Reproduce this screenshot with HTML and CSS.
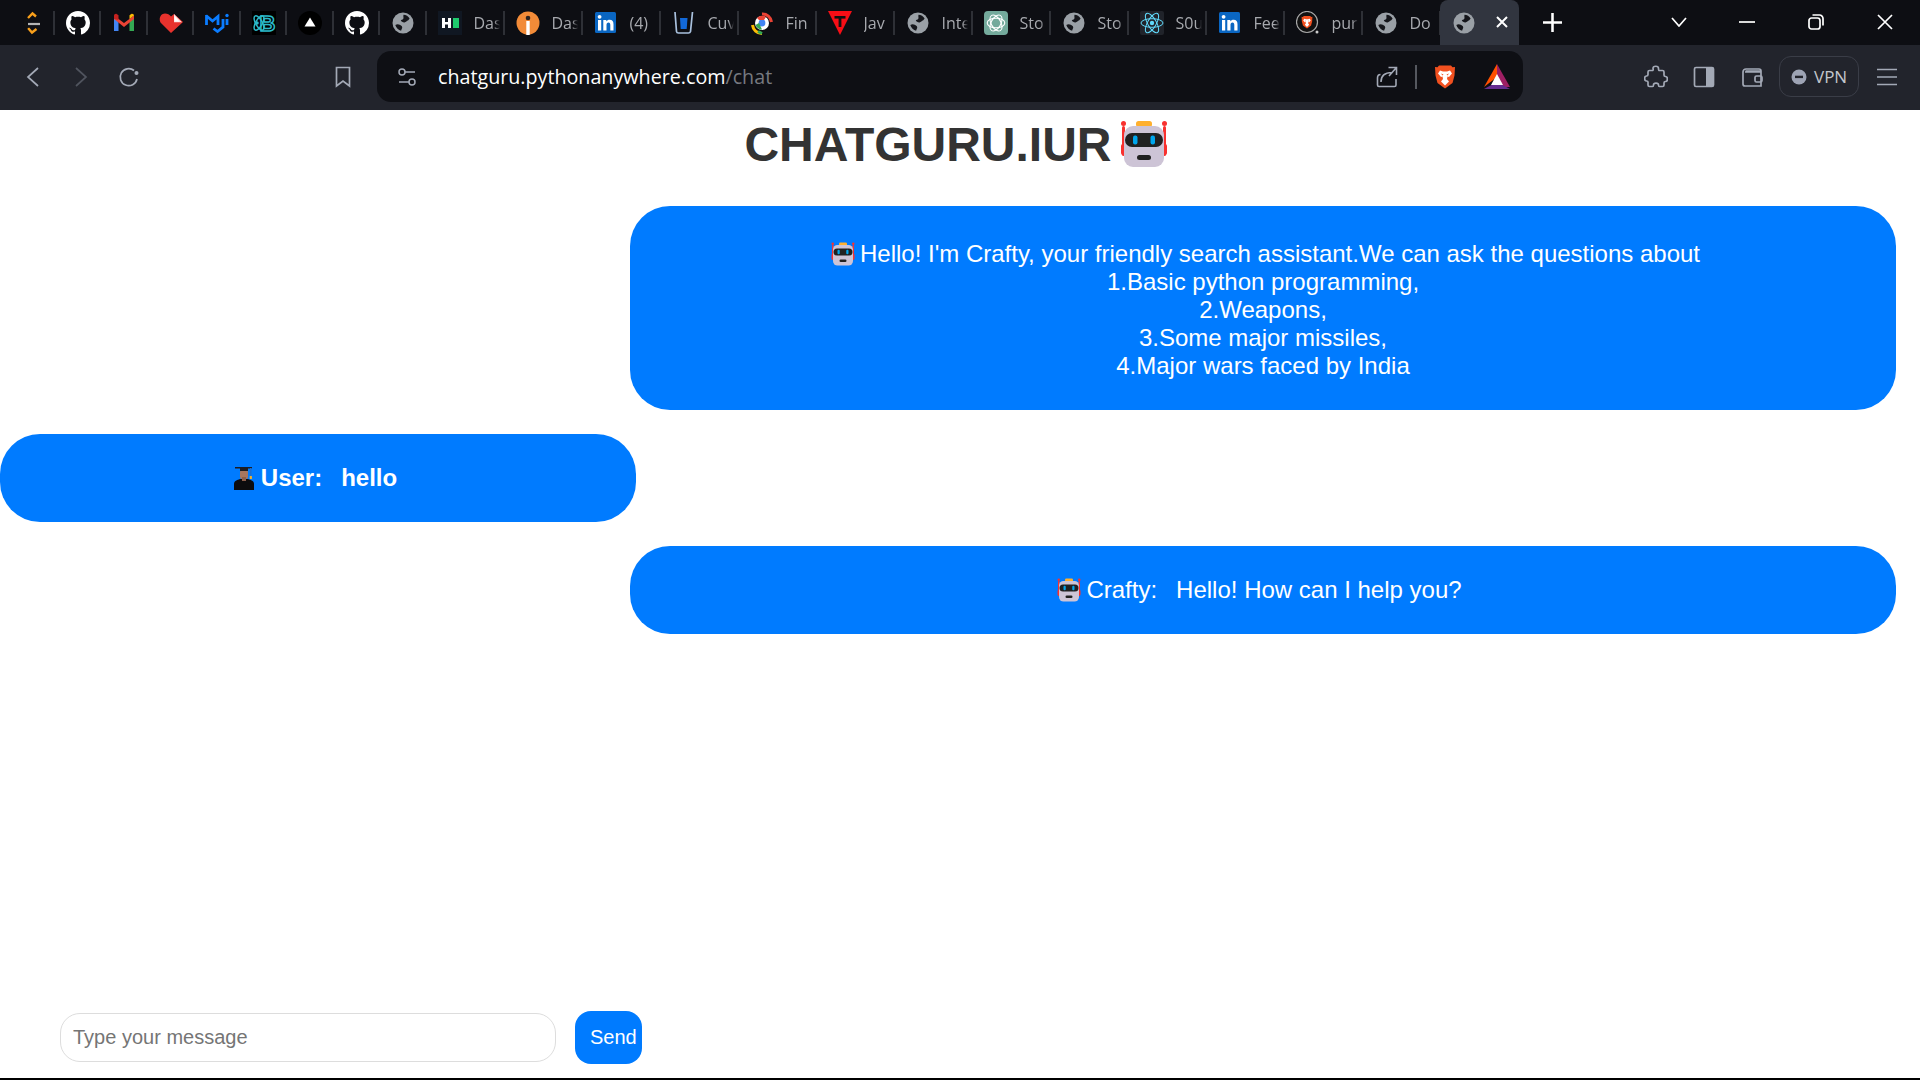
FILE: index.html
```html
<!DOCTYPE html>
<html lang="en">
<head>
<meta charset="utf-8">
<title>ChatGuru</title>
<link rel="stylesheet" href="styles.css">
</head>
<body>
<svg class="defs" xmlns="http://www.w3.org/2000/svg">
  <symbol id="i-github" viewBox="0 0 16 16"><path fill="#fff" d="M8 0C3.58 0 0 3.58 0 8c0 3.54 2.29 6.53 5.47 7.59.4.07.55-.17.55-.38 0-.19-.01-.82-.01-1.49-2.01.37-2.53-.49-2.69-.94-.09-.23-.48-.94-.82-1.13-.28-.15-.68-.52-.01-.53.63-.01 1.08.58 1.23.82.72 1.21 1.87.87 2.33.66.07-.52.28-.87.51-1.07-1.78-.2-3.64-.89-3.64-3.95 0-.87.31-1.59.82-2.15-.08-.2-.36-1.02.08-2.12 0 0 .67-.21 2.2.82.64-.18 1.32-.27 2-.27.68 0 1.36.09 2 .27 1.53-1.04 2.2-.82 2.2-.82.44 1.1.16 1.92.08 2.12.51.56.82 1.27.82 2.15 0 3.07-1.87 3.75-3.65 3.95.29.25.54.73.54 1.48 0 1.07-.01 1.93-.01 2.2 0 .21.15.46.55.38A8.013 8.013 0 0016 8c0-4.42-3.58-8-8-8z"/></symbol>
  <symbol id="i-globe" viewBox="0 0 24 24"><circle cx="12" cy="12" r="10.500" fill="#9aa0a6"/><path fill="#15161b" d="M12.500 3.800c2.600.2 4.800 1.500 6.100 3.700l-1.300 1.800c-1.700.5-2.300 2.300-4.100 2.100-1.500 0-2.900-.9-3.400-2.200 1.400-.3 2.700-.9 2.700-2.100 0-1.300-.3-2-0-3.300zM4.300 14c1.500-1.100 3.200-1.100 4.400-.2 1.200.8 2.300 1 2.500 2.400.2 1.200-.8 1.800-1.100 3.500-2.600-.6-4.900-3-5.800-5.700z"/></symbol>
  <symbol id="i-leet" viewBox="0 0 24 24"><path d="M14 2 5 11.500" fill="none" stroke="#111" stroke-width="2.500"/><path d="M17 5.500 13.500 2.500 9 7" fill="none" stroke="#f89f1b" stroke-width="2.400"/><path d="M9 17l4 4.500 4.500-3.500" fill="none" stroke="#f89f1b" stroke-width="2.400"/><path d="M5 11.500 9 17" fill="none" stroke="#111" stroke-width="2.500"/><path d="M9 13h12" stroke="#b3b3b3" stroke-width="2.200"/></symbol>
  <symbol id="i-gmail" viewBox="0 0 24 24"><path fill="#4285f4" d="M2 6v14h4.500V9z"/><path fill="#34a853" d="M22 6v14h-4.500V9z"/><path fill="#ea4335" d="M2 4.500 12 12l10-7.500V8l-10 8L2 8z"/><path fill="#fbbc04" d="M17.500 8 22 4.500c0-1-1-2-2.300-1.800L17.500 4.300z"/><path fill="#c5221f" d="M2 8V4.500c0-1 1-2 2.300-1.800l2.200 1.600V9z"/></symbol>
  <symbol id="i-heart" viewBox="0 0 24 24"><path fill="#e8322d" d="M12 22 1.500 11.500C-.5 8 1.500 2.500 6 2.500c2.500 0 4.500 1 6 3 1-1 2-1.800 3-2.500l9 8z"/><path fill="#ffd9d6" d="M15 3l8 8.300h-8z"/><path fill="#fff" d="M15.500 5l5 5.500h-5z"/></symbol>
  <symbol id="i-mui" viewBox="0 0 24 24"><path fill="none" stroke="#0a7cff" stroke-width="2.800" d="M1.500 4v10M1 4.500l6.500 5.500 5.500-4.500V14M18 8v8l-5.500 4.500-4-3M22 8v6"/><circle cx="22" cy="4.500" r="1.700" fill="#0a7cff"/></symbol>
  <symbol id="i-atom" viewBox="0 0 24 24"><rect width="24" height="24" fill="#000"/><g fill="none" stroke="#2bb9c9" stroke-width="1.500"><ellipse cx="7" cy="12" rx="8" ry="3.300" transform="rotate(60 7 12)"/><ellipse cx="7" cy="12" rx="8" ry="3.300" transform="rotate(-60 7 12)"/></g><circle cx="5" cy="12" r="1.800" fill="#2bb9c9"/><text x="7.500" y="20" class="svg-b">B</text></symbol>
  <symbol id="i-tri" viewBox="0 0 24 24"><circle cx="12" cy="12" r="12" fill="#000"/><path fill="#fff" d="M12 6.500 17.500 15.500H6.500z"/></symbol>
  <symbol id="i-hr" viewBox="0 0 24 24"><rect width="24" height="24" fill="#101722"/><rect x="4" y="7" width="3" height="10" fill="#fff"/><rect x="10" y="7" width="3" height="10" fill="#fff"/><rect x="6" y="11" width="5" height="2.500" fill="#fff"/><rect x="15" y="7" width="6" height="10" fill="#1ec96d"/></symbol>
  <symbol id="i-info" viewBox="0 0 24 24"><circle cx="12" cy="12" r="11.500" fill="#f28b38"/><rect x="10.300" y="10" width="3.400" height="14" fill="#fff"/><circle cx="12" cy="7" r="2.300" fill="#2d2320"/></symbol>
  <symbol id="i-li" viewBox="0 0 24 24"><rect x="1" y="1" width="21" height="21" rx="1.500" fill="#0a66c2"/><rect x="4" y="9" width="3.200" height="10.500" fill="#fff"/><circle cx="5.600" cy="5.800" r="1.900" fill="#fff"/><path fill="#fff" d="M9.300 9h3v1.500c.7-1.100 1.800-1.700 3.300-1.700 2.800 0 3.900 1.700 3.900 4.500v6.200h-3.200v-5.600c0-1.500-.5-2.400-1.800-2.400-1.300 0-2 1-2 2.500v5.500H9.300z"/></symbol>
  <symbol id="i-cup" viewBox="0 0 24 24"><path fill="none" stroke="#a9c1de" stroke-width="1.700" d="M3 1l1.500 19.500c.1 1 .9 1.500 2 1.500h10c1 0 1.700-.5 2-1.500L20.500 1"/><path fill="#1268d8" d="M8 7h7.500l-.8 11h-6z"/></symbol>
  <symbol id="i-lens" viewBox="0 0 24 24"><path fill="none" stroke="#ea4335" stroke-width="3" d="M12 3a9 9 0 0 1 9.500 8"/><path fill="none" stroke="#fbbc04" stroke-width="3" d="M2.500 14a9.500 9.500 0 0 0 9.500 8.500"/><path fill="none" stroke="#34a853" stroke-width="3" d="M8 20.500l4 2"/><circle cx="12" cy="12" r="7" fill="#fff"/><circle cx="12" cy="12" r="3.400" fill="#4285f4"/><path fill="#ea4335" d="M7 7a7 7 0 0 1 9-1l-2 3H9z"/><path fill="#34a853" d="M5.500 14 9 12l3 6.500a7 7 0 0 1-6.500-4.500z"/></symbol>
  <symbol id="i-tt" viewBox="0 0 24 24"><path fill="#f80e16" d="M0 0h24L12 24z"/><rect x="6.500" y="5" width="11" height="2.600" fill="#111"/><rect x="10.600" y="5" width="2.800" height="11" fill="#111"/></symbol>
  <symbol id="i-gpt" viewBox="0 0 24 24"><rect width="24" height="24" rx="4" fill="#74aa9c"/><g fill="none" stroke="#fff" stroke-width="1.100"><ellipse cx="12" cy="12" rx="8.800" ry="4.800"/><ellipse cx="12" cy="12" rx="8.800" ry="4.800" transform="rotate(60 12 12)"/><ellipse cx="12" cy="12" rx="8.800" ry="4.800" transform="rotate(120 12 12)"/></g></symbol>
  <symbol id="i-react" viewBox="0 0 24 24"><rect width="24" height="24" rx="2" fill="#20232a"/><g fill="none" stroke="#61dafb" stroke-width="1"><ellipse cx="12" cy="12" rx="11" ry="4.300"/><ellipse cx="12" cy="12" rx="11" ry="4.300" transform="rotate(60 12 12)"/><ellipse cx="12" cy="12" rx="11" ry="4.300" transform="rotate(120 12 12)"/></g><circle cx="12" cy="12" r="2.200" fill="#61dafb"/></symbol>
  <symbol id="i-lion" viewBox="0 0 24 24"><path fill="#f1501f" d="M6 1h12l1.500 1.800L22 2.500l-.5 8.500-2 7.500L12 24l-7.500-5.500-2-7.500L2 2.500l2.500.3z"/><path fill="#fff" d="M7 6l3 1h4l3-1 2 3-3 3.500-1.500-.5-.5 2.500 2 2.500-4 4-4-4 2-2.500-.5-2.500-1.500.5L5 9z"/><path fill="#f1501f" d="M8 9l2.500 1-1 1zM16 9l-2.500 1 1 1z"/></symbol>
  <symbol id="i-pur" viewBox="0 0 24 24"><circle cx="11" cy="11" r="10.500" fill="#111" stroke="#a8a8a8" stroke-width="1.200"/><use href="#i-lion" x="4.500" y="4" width="13" height="14"/><circle cx="21" cy="21" r="1.500" fill="#ccc"/></symbol>
  <symbol id="i-bat" viewBox="0 0 28 28"><path fill="#9e1f63" d="M14 1 27 24H20L14 12z"/><path fill="#ff5000" d="M14 1 1 24 14 14z"/><path fill="#662d91" d="M1 26h26L14 19z"/><path fill="#fff" d="M14 11 20 22H8z"/></symbol>
  <symbol id="robot" viewBox="0 0 48 48"><rect x="2" y="6" width="3" height="30" rx="1.500" fill="#f8312f"/><rect x="43" y="6" width="3" height="30" rx="1.500" fill="#f8312f"/><circle cx="3.500" cy="3.500" r="2.500" fill="#f8312f"/><circle cx="44.500" cy="3.500" r="2.500" fill="#f8312f"/><rect x="1" y="24" width="6" height="11" rx="2" fill="#f8312f"/><rect x="41" y="24" width="6" height="11" rx="2" fill="#f8312f"/><rect x="16" y="1" width="16" height="6" rx="2.500" fill="#ffb02e"/><rect x="4" y="6" width="40" height="41" rx="9" fill="#cdc4d6"/><rect x="5" y="13" width="38" height="14" rx="7" fill="#212121"/><rect x="13" y="15.500" width="4.500" height="9" rx="2" fill="#00a6ed"/><rect x="30.500" y="15.500" width="4.500" height="9" rx="2" fill="#00a6ed"/><rect x="17" y="35" width="14" height="5" rx="2.500" fill="#212121"/></symbol>
  <symbol id="grad" viewBox="0 0 20 24"><path fill="#0c0c0e" d="M0 24v-6c0-3 3-4 6-5h8c3 1 6 2 6 5v6z"/><rect x="6" y="4" width="8" height="9" rx="2" fill="#a8765f"/><rect x="8" y="11" width="4" height="4" fill="#8d5f4b"/><path fill="#1d1d22" d="M1 1h17v1.500H14V5H6V2.500H1z"/><rect x="16" y="2" width="1.500" height="9" fill="#1c6fd0"/><rect x="15.700" y="10" width="2.200" height="3" fill="#f3b32a"/></symbol>
</svg>

<header class="chrome">
  <div class="tabstrip">
    <div class="tabs">
      <div class="tab pinned"><svg class="fav"><use href="#i-leet"/></svg></div>
      <div class="tab pinned"><svg class="fav"><use href="#i-github"/></svg></div>
      <div class="tab pinned"><svg class="fav"><use href="#i-gmail"/></svg></div>
      <div class="tab pinned"><svg class="fav"><use href="#i-heart"/></svg></div>
      <div class="tab pinned"><svg class="fav"><use href="#i-mui"/></svg></div>
      <div class="tab pinned"><svg class="fav"><use href="#i-atom"/></svg></div>
      <div class="tab pinned"><svg class="fav"><use href="#i-tri"/></svg></div>
      <div class="tab pinned"><svg class="fav"><use href="#i-github"/></svg></div>
      <div class="tab pinned"><svg class="fav"><use href="#i-globe"/></svg></div>
      <div class="tab"><svg class="fav"><use href="#i-hr"/></svg><span class="tab-title">Das</span></div>
      <div class="tab"><svg class="fav"><use href="#i-info"/></svg><span class="tab-title">Das</span></div>
      <div class="tab"><svg class="fav"><use href="#i-li"/></svg><span class="tab-title">(4)</span></div>
      <div class="tab"><svg class="fav"><use href="#i-cup"/></svg><span class="tab-title">Cuv</span></div>
      <div class="tab"><svg class="fav"><use href="#i-lens"/></svg><span class="tab-title">Fin</span></div>
      <div class="tab"><svg class="fav"><use href="#i-tt"/></svg><span class="tab-title">Jav</span></div>
      <div class="tab"><svg class="fav"><use href="#i-globe"/></svg><span class="tab-title">Inte</span></div>
      <div class="tab"><svg class="fav"><use href="#i-gpt"/></svg><span class="tab-title">Sto</span></div>
      <div class="tab"><svg class="fav"><use href="#i-globe"/></svg><span class="tab-title">Sto</span></div>
      <div class="tab"><svg class="fav"><use href="#i-react"/></svg><span class="tab-title">S0u</span></div>
      <div class="tab"><svg class="fav"><use href="#i-li"/></svg><span class="tab-title">Fee</span></div>
      <div class="tab"><svg class="fav"><use href="#i-pur"/></svg><span class="tab-title">pur</span></div>
      <div class="tab"><svg class="fav"><use href="#i-globe"/></svg><span class="tab-title">Do</span></div>
      <div class="tab active"><svg class="fav"><use href="#i-globe"/></svg>
        <svg class="tab-close" viewBox="0 0 12 12"><path d="M1 1l10 10M11 1 1 11"/></svg>
      </div>
    </div>
    <svg class="newtab" viewBox="0 0 18 18"><path d="M9 0v18M0 9h18"/></svg>
    <div class="winctl">
      <div class="ctl"><svg class="ctl-ico" width="16" height="10" viewBox="0 0 16 10"><path d="M1 1l7 8 7-8"/></svg></div>
      <div class="ctl"><svg class="ctl-ico" width="16" height="4" viewBox="0 0 16 4"><path d="M0 2h16"/></svg></div>
      <div class="ctl"><svg class="ctl-ico" width="16" height="16" viewBox="0 0 16 16"><rect x="1" y="4" width="11" height="11" rx="2.500"/><path d="M4.500 1h7a3.500 3.500 0 0 1 3.500 3.500v7"/></svg></div>
      <div class="ctl"><svg class="ctl-ico" width="16" height="16" viewBox="0 0 16 16"><path d="M1 1l14 14M15 1 1 15"/></svg></div>
    </div>
  </div>
  <div class="toolbar">
    <div class="tb-btn"><svg class="tb-ico" width="24" height="24" viewBox="0 0 24 24"><path d="M17 3 7 12l10 9"/></svg></div>
    <div class="tb-btn dim"><svg class="tb-ico" width="24" height="24" viewBox="0 0 24 24"><path d="M7 3l10 9-10 9"/></svg></div>
    <div class="tb-btn"><svg class="tb-ico" width="24" height="24" viewBox="0 0 24 24"><path d="M20 14a8.500 8.500 0 1 1-3-8.500"/><circle class="solid" cx="19.500" cy="8" r="2"/></svg></div>
    <div class="tb-btn bookmark"><svg class="tb-ico" width="24" height="24" viewBox="0 0 24 24"><path d="M5.500 2.500h13v18.500l-6.500-5-6.500 5z"/></svg></div>
    <div class="address">
      <svg class="tune" width="20" height="20" viewBox="0 0 20 20"><circle cx="5" cy="5" r="3"/><path d="M8 5h10M2 15h10"/><circle cx="15" cy="15" r="3"/></svg>
      <span class="url">chatguru.pythonanywhere.com<span class="url-path">/chat</span></span>
      <svg class="addr-share" width="24" height="24" viewBox="0 0 24 24"><path d="M21 14v6a1.500 1.500 0 0 1-1.500 1.500H4A1.500 1.500 0 0 1 2.500 20v-7c0-2 1-3.500 3-3.500M6 17c0-6 4-9.500 11-9.500M13.500 2.500h8v7.500M21 3 14 11"/></svg>
      <span class="addr-sep"></span>
      <svg class="lion" width="24" height="27"><use href="#i-lion"/></svg>
      <svg class="bat" width="28" height="28"><use href="#i-bat"/></svg>
    </div>
    <div class="tb-right">
      <div class="tb-btn"><svg class="tb-ico" width="24" height="24" viewBox="0 0 24 24"><path d="M9 3.500c0-3 5.500-3 5.500 0 0 1.500 0 2 1 2h3c1 0 1.500.5 1.500 1.500v3c0 1 .5 1.500 1.500 1.500 2.500 0 2.500 5 0 5-1 0-1.500.5-1.500 1.500v2c0 1-.5 1.500-1.500 1.500h-3c-1 0-1-.5-1-1.500 0-2.500-5-2.500-5 0 0 1 0 1.500-1 1.500H5.500c-1 0-1.500-.5-1.500-1.500v-3c0-1-.5-1-1.500-1-2.500 0-2.500-5 0-5 1 0 1.500-.5 1.500-1.500V7c0-1 .5-1.500 1.500-1.500h2.500c1 0 1.500-.5 1-2z"/></svg></div>
      <div class="tb-btn"><svg class="tb-ico" width="24" height="24" viewBox="0 0 24 24"><rect x="2.500" y="2.500" width="19" height="19" rx="1.500"/><rect class="solid" x="14" y="3" width="7" height="18"/></svg></div>
      <div class="tb-btn"><svg class="tb-ico" width="24" height="24" viewBox="0 0 24 24"><path d="M3 7a3 3 0 0 1 3-3h13c1 0 2 .5 2 2H5.500M3 7v12c0 1 1 2 2 2h16v-14H5"/><rect x="15" y="11" width="7" height="6" rx="1.500"/></svg></div>
      <div class="vpn"><svg width="16" height="16" viewBox="0 0 16 16"><circle cx="8" cy="8" r="7.500" fill="#9da3b4"/><rect x="4" y="6.700" width="8" height="2.400" fill="#22242c"/></svg><span>VPN</span></div>
      <div class="tb-btn"><svg class="tb-ico" width="24" height="24" viewBox="0 0 24 24"><path d="M2 4.500h20M2 12h20M2 19.500h20"/></svg></div>
    </div>
  </div>
</header>

<main class="page">
  <h1 class="title">CHATGURU.IUR<svg class="robot-lg"><use href="#robot"/></svg></h1>
  <div class="chat">
    <div class="bubble bot intro"><svg class="emoji"><use href="#robot"/></svg>Hello! I'm Crafty, your friendly search assistant.We can ask the questions about<br>1.Basic python programming,<br>2.Weapons,<br>3.Some major missiles,<br>4.Major wars faced by India</div>
    <div class="bubble user"><svg class="emoji grad"><use href="#grad"/></svg><span class="who">User:</span> &nbsp; hello</div>
    <div class="bubble bot reply"><svg class="emoji"><use href="#robot"/></svg><span class="who">Crafty:</span> &nbsp; Hello! How can I help you?</div>
  </div>
  <form class="composer">
    <input class="msg" type="text" placeholder="Type your message">
    <button class="send" type="button">Send</button>
  </form>
</main>
</body>
</html>
```
FILE: styles.css
```css
* { box-sizing: border-box; }
html, body { margin: 0; height: 100%; }
body { display: flex; flex-direction: column; height: 1080px; overflow: hidden; background: #fff; font-family: "Liberation Sans", Arial, sans-serif; }
.defs { display: none; }
.svg-b { font: 700 22px "Liberation Sans", sans-serif; fill: none; stroke: #2bb9c9; stroke-width: 1.500px; }

/* browser chrome */
.chrome { flex: none; height: 110px; background: #22242c; font-family: "Open Sans", "Noto Sans", sans-serif; }
.tabstrip { display: flex; align-items: stretch; height: 45px; background: #0d0e13; }
.tabs { display: flex; padding-left: 8px; }
.tab { position: relative; display: flex; align-items: center; width: 78px; height: 45px; padding: 0 5px 0 11px; gap: 12px; }
.tab::after { content: ""; position: absolute; right: 0; top: 11px; height: 24px; width: 2px; background: #2e3036; }
.tab.pinned { width: 46.500px; padding: 0; justify-content: center; }
.tab.active { border-radius: 8px 8px 0 0; background: #31353f; width: 79px; margin-left: -1px; padding-left: 12px; }
.tab.active::after { display: none; }
.fav { flex: none; width: 24px; height: 24px; margin-top: 1px; }
.tab-title { flex: 1; min-width: 0; overflow: hidden; white-space: nowrap; color: #a7a9ae; font-size: 16px; -webkit-mask-image: linear-gradient(90deg, #000 78%, transparent); mask-image: linear-gradient(90deg, #000 78%, transparent); }
.tab-close { width: 12px; height: 12px; margin-left: 8px; margin-top: -1px; fill: none; stroke: #fff; stroke-width: 2; }
.newtab { align-self: center; width: 19px; height: 19px; margin-left: 24px; fill: none; stroke: #fff; stroke-width: 2.400; margin-top: -1px; }
.winctl { display: flex; margin-left: auto; margin-right: 1px; }
.ctl { width: 68.700px; display: flex; align-items: center; justify-content: center; padding-bottom: 1px; }
.ctl-ico { fill: none; stroke: #fff; stroke-width: 1.700; }

.toolbar { display: flex; align-items: center; height: 65px; padding-left: 9px; padding-bottom: 2px; }
.tb-btn { flex: none; width: 48px; height: 48px; display: flex; align-items: center; justify-content: center; }
.tb-ico { fill: none; stroke: #a3a9b6; stroke-width: 1.700; }
.tb-ico .solid { fill: #a3a9b6; stroke: none; }
.tb-btn.dim .tb-ico { stroke: #50545e; }
.bookmark { margin-left: 166px; }
.address { display: flex; align-items: center; width: 1146px; height: 51px; margin-left: 10px; padding: 0 12px 0 20px; border-radius: 14px; background: #0e0f14; }
.tune { flex: none; fill: none; stroke: #a3a9b6; stroke-width: 1.500; }
.url { margin-left: 21px; color: #fff; font-size: 19.700px; white-space: nowrap; }
.url-path { color: #777a80; }
.addr-share { flex: none; margin-left: auto; fill: none; stroke: #a3a9b6; stroke-width: 1.600; }
.addr-sep { flex: none; width: 2px; height: 24px; margin: 0 16px; background: #55585f; }
.lion { flex: none; }
.bat { flex: none; margin-left: 26.500px; }
.tb-right { display: flex; align-items: center; margin-left: 109px; }
.vpn { flex: none; display: flex; align-items: center; gap: 7px; width: 80px; height: 41px; margin: 0 4px 0 3px; padding-left: 11px; border: 1.500px solid #3a3d47; border-radius: 12px; color: #c3c6cd; font-size: 17px; }

/* page */
.page { flex: 1; min-height: 0; display: flex; flex-direction: column; border-bottom: 2px solid #000; padding-bottom: 14px; }
.title { display: flex; align-items: center; justify-content: center; height: 62px; margin: 0 0 34px; padding: 7px 8px 0 0; color: #333; font-size: 48px; font-weight: 700; line-height: 55px; }
.robot-lg { width: 48px; height: 48px; margin-left: 8px; margin-top: -1px; }
.chat { display: flex; flex-direction: column; gap: 24px; }
.bubble { padding: 30px 0; border-radius: 40px; background: #007bff; color: #fff; font-size: 24px; line-height: 28px; text-align: center; }
.bubble.bot { align-self: flex-end; width: 1266px; margin-right: 24px; }
.bubble.intro { padding: 34px 0 30px; }
.bubble.intro .emoji { margin-left: 5px; }
.bubble.reply { padding-right: 7px; }
.bubble.user { align-self: flex-start; width: 636px; font-weight: 700; padding-right: 5px; }
.who { margin-right: -1px; }
.emoji { width: 24px; height: 24px; margin-right: 5px; vertical-align: -4px; }
.emoji.grad { width: 20px; margin-right: 7px; }
.composer { display: flex; align-items: center; gap: 19px; margin-top: auto; padding-left: 60px; }
.msg { width: 496px; height: 49px; padding: 0 12px; border: 1px solid #ddd; border-radius: 20px; background: #fff; color: #333; font: 20px "Liberation Sans", Arial, sans-serif; outline: none; }
.msg::placeholder { color: #757575; }
.send { width: 67px; height: 53px; padding: 0 0 0 15px; border: 0; border-radius: 16px; background: #007bff; color: #fff; font: 20px "Liberation Sans", Arial, sans-serif; text-align: left; white-space: nowrap; overflow: hidden; }
```
